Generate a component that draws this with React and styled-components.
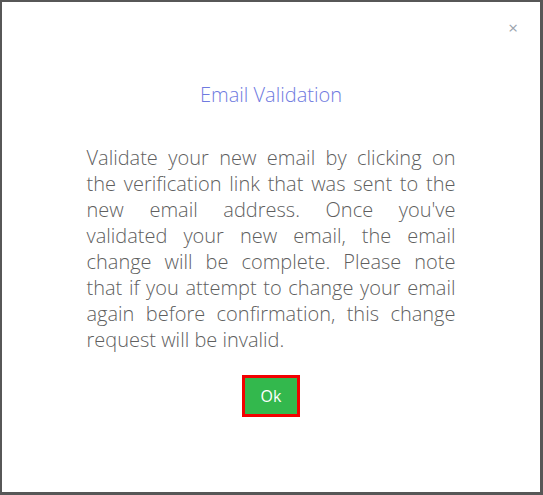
import React from 'react';
import styled, { createGlobalStyle } from 'styled-components';

const GlobalStyle = createGlobalStyle`
    html, body {
        margin: 0;
        padding: 0;
        background: #575757;
        font-family: "Open Sans", "Liberation Sans", sans-serif;
    }
`;

const Backdrop = styled.div`
    width: 543px;
    height: 495px;
    box-sizing: border-box;
    padding: 2px 3px 3px 2px;
`;

const Modal = styled.div`
    position: relative;
    height: 100%;
    background: #fff;
    display: flex;
    flex-direction: column;
    align-items: center;
    padding-top: 80px;
    box-sizing: border-box;
`;

const Close = styled.button`
    position: absolute;
    top: 16px;
    right: 22px;
    border: none;
    background: none;
    padding: 0;
    font-family: "Open Sans", sans-serif;
    font-size: 17px;
    line-height: 20px;
    color: #9aa3ad;
    cursor: pointer;
`;

const Title = styled.h4`
    margin: 0;
    font-weight: 300;
    font-size: 20px;
    line-height: 26px;
    color: #6f7ae0;
`;

const Message = styled.p`
    margin: 37px 0 0;
    width: 369px;
    font-weight: 300;
    font-size: 20px;
    line-height: 26px;
    color: #5f5f5f;
    text-align: justify;
`;

const OkButton = styled.button`
    margin-top: 22px;
    width: 58px;
    height: 42px;
    border: 3px solid #f20000;
    background: #33b84d;
    color: #fff;
    font-family: "Open Sans", sans-serif;
    font-size: 16px;
    cursor: pointer;
`;

export default function App() {
    return (
        <>
            <GlobalStyle />
            <Backdrop>
                <Modal>
                    <Close aria-label="close">×</Close>
                    <Title>Email Validation</Title>
                    <Message>
                        Validate your new email by clicking on the verification link that was sent to the new email address. Once you've validated your new email, the email change will be complete. Please note that if you attempt to change your email again before confirmation, this change request will be invalid.
                    </Message>
                    <OkButton>Ok</OkButton>
                </Modal>
            </Backdrop>
        </>
    );
}
